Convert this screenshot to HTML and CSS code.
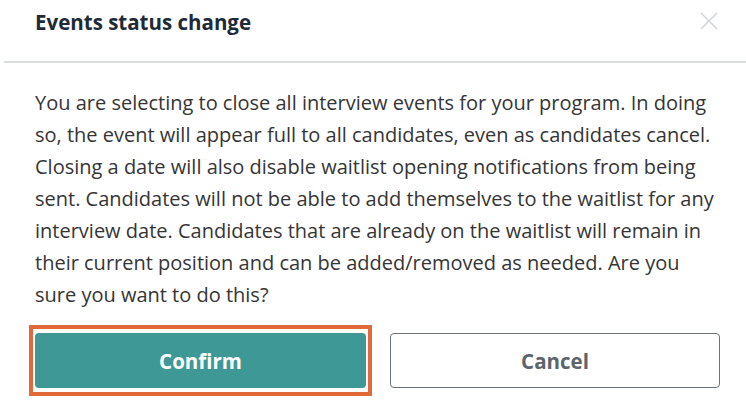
FILE: index.html
```html
<!DOCTYPE html>
<html lang="en">
<head>
    <meta charset="UTF-8">
    <meta name="viewport" content="width=device-width, initial-scale=1.0">
    <title>Events status change</title>
    <link rel="stylesheet" href="styles.css">
</head>
<body>
    <div class="modal">
        <div class="modal-header">
            <div class="modal-title">Events status change</div>
            <button class="close-btn" aria-label="Close">
                <svg width="18" height="18" viewBox="0 0 18 18">
                    <path d="M1 1L17 17M17 1L1 17" stroke="#cfd1d3" stroke-width="1.3" fill="none"/>
                </svg>
            </button>
        </div>
        <div class="modal-body">
            <p class="message">You are selecting to close all interview events for your program. In doing so, the event will appear full to all candidates, even as candidates cancel. Closing a date will also disable waitlist opening notifications from being sent. Candidates will not be able to add themselves to the waitlist for any interview date. Candidates that are already on the waitlist will remain in their current position and can be added/removed as needed. Are you sure you want to do this?</p>
            <div class="actions">
                <button class="btn btn-primary focused">Confirm</button>
                <button class="btn btn-secondary">Cancel</button>
            </div>
        </div>
    </div>
</body>
</html>
```

FILE: styles.css
```css
body, html {
    margin: 0;
    padding: 0;
    background: #fff;
    font-family: "Open Sans", "Liberation Sans", sans-serif;
}

.modal {
    width: 742px;
    margin-left: 4px;
    background: #fff;
}

.modal-header {
    display: flex;
    align-items: flex-start;
    justify-content: space-between;
    padding: 8px 28px 25px 31px;
    border-bottom: 2px solid #dadee2;
}

.modal-title {
    font-size: 20.5px;
    line-height: 28px;
    font-weight: 700;
    color: #1e2a38;
}

.close-btn {
    border: none;
    background: none;
    padding: 0;
    margin-top: 4px;
    width: 18px;
    height: 18px;
    cursor: pointer;
}

.close-btn svg {
    display: block;
}

.modal-body {
    padding: 24px 26px 0 31px;
}

.message {
    margin: 0;
    font-size: 20px;
    line-height: 32px;
    color: #353535;
}

.actions {
    display: grid;
    grid-template-columns: 331px 330px;
    gap: 24px;
    margin-top: 22px;
    padding-bottom: 20px;
}

.btn {
    height: 55px;
    border-radius: 4px;
    font-family: inherit;
    font-size: 20.5px;
    font-weight: 700;
    cursor: pointer;
}

.btn-primary {
    position: relative;
    background: #3e9896;
    border: none;
    color: #fff;
}

/* keyboard focus ring */
.btn-primary.focused::after {
    content: "";
    position: absolute;
    top: -8px;
    bottom: -8px;
    left: -6px;
    right: -6px;
    border: 4px solid #e2693a;
}

.btn-secondary {
    background: #fff;
    border: 1.5px solid #6b7279;
    color: #5d646b;
}
```
